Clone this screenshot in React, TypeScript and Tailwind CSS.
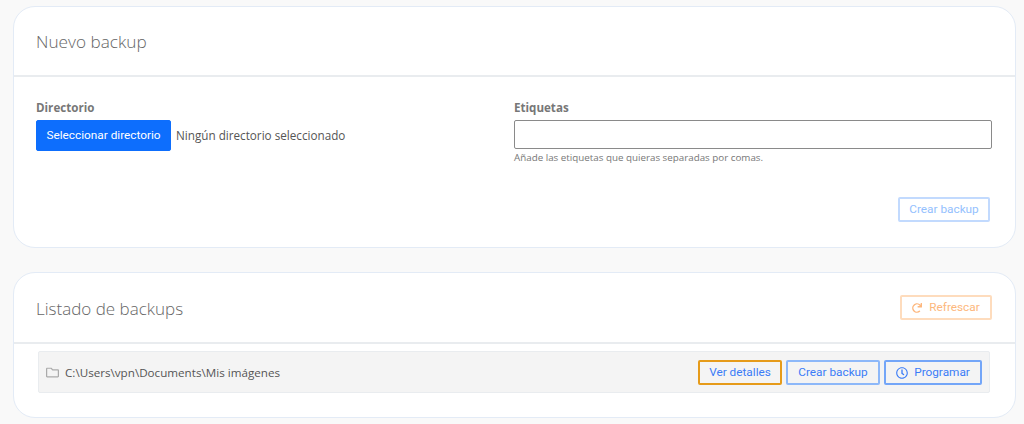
import React from 'react';
import { FaRedo, FaRegClock, FaRegFolder } from 'react-icons/fa';

const sans = "font-['Open_Sans',sans-serif]";
const btn = "font-['Roboto',sans-serif] text-[11.8px] font-normal rounded-[2px]";

export default function App() {
  return (
    <div className={`${sans} w-[1024px] h-[424px] overflow-hidden bg-[#f9f9f9] px-[13px] pt-[6px] text-[#555]`}>
      {/* Nuevo backup */}
      <section className="h-[242px] w-[1003px] rounded-[22px] border border-[#e3ebf6] bg-white">
        <div className="h-[70px] border-b-2 border-[#e9ecef] px-[22px] pt-[2px] flex items-center">
          <h2 className="text-[17.2px] font-light text-[#666]">Nuevo backup</h2>
        </div>
        <div className="flex px-[22px] pt-[23px]">
          <div className="w-[478px]">
            <label className="block text-[11.6px] font-bold text-[#777] leading-[15px]">Directorio</label>
            <div className="mt-[5px] flex items-center gap-[5px]">
              <button className={`${btn} border h-[31px] w-[135px] border-[#0d6efd] bg-[#0d6efd] text-white`}>Seleccionar directorio</button>
              <span className="text-[11.7px] text-[#555]">Ningún directorio seleccionado</span>
            </div>
          </div>
          <div className="w-[479px]">
            <label className="block text-[11.6px] font-bold text-[#777] leading-[15px]">Etiquetas</label>
            <input className="mt-[5px] block h-[29px] w-[478px] rounded-[2px] border border-[#8a8a8a] bg-white" />
            <p className="mt-[2px] text-[9.8px] leading-[14px] text-[#777]">Añade las etiquetas que quieras separadas por comas.</p>
            <div className="mt-[32px] flex justify-end pr-[3px]">
              <button className={`${btn} border-2 h-[25px] w-[92px] border-[#c2dafe] text-[#94bffe]`}>Crear backup</button>
            </div>
          </div>
        </div>
      </section>

      {/* Listado de backups */}
      <section className="mt-[24px] h-[146px] w-[1003px] rounded-[22px] border border-[#e3ebf6] bg-white">
        <div className="h-[71px] border-b-2 border-[#e9ecef] px-[22px] flex items-center justify-between">
          <h2 className="mt-[2px] text-[17px] font-light text-[#666]">Listado de backups</h2>
          <button className={`${btn} border-2 mr-[1px] h-[25px] w-[92px] flex items-center justify-center gap-[7px] border-[#fedcbd] text-[#fdb77d]`}>
            <FaRedo size={10} />
            Refrescar
          </button>
        </div>
        <div className="ml-[24px] mt-[7px] flex h-[42px] w-[952px] items-center rounded-[2px] border border-[#e9ecef] bg-[#f4f4f4] px-[7px]">
          <FaRegFolder size={13} className="text-[#aaa]" />
          <span className="ml-[6px] mt-[1px] text-[11.65px] text-[#555]">C:\Users\vpn\Documents\Mis imágenes</span>
          <div className="ml-auto flex gap-[4px]">
            <button className={`${btn} pt-[1px] h-[25px] w-[84px] border-2 border-[#e69b1a] text-[#3b7cf7]`}>Ver detalles</button>
            <button className={`${btn} pt-[1px] h-[25px] w-[94px] border-2 border-[#8db8f9] text-[#3b7cf7]`}>Crear backup</button>
            <button className={`${btn} pt-[1px] h-[25px] w-[98px] flex items-center justify-center gap-[6px] border-2 border-[#74a6f8] text-[#3b7cf7]`}>
              <FaRegClock size={12} />
              Programar
            </button>
          </div>
        </div>
      </section>
    </div>
  );
}
